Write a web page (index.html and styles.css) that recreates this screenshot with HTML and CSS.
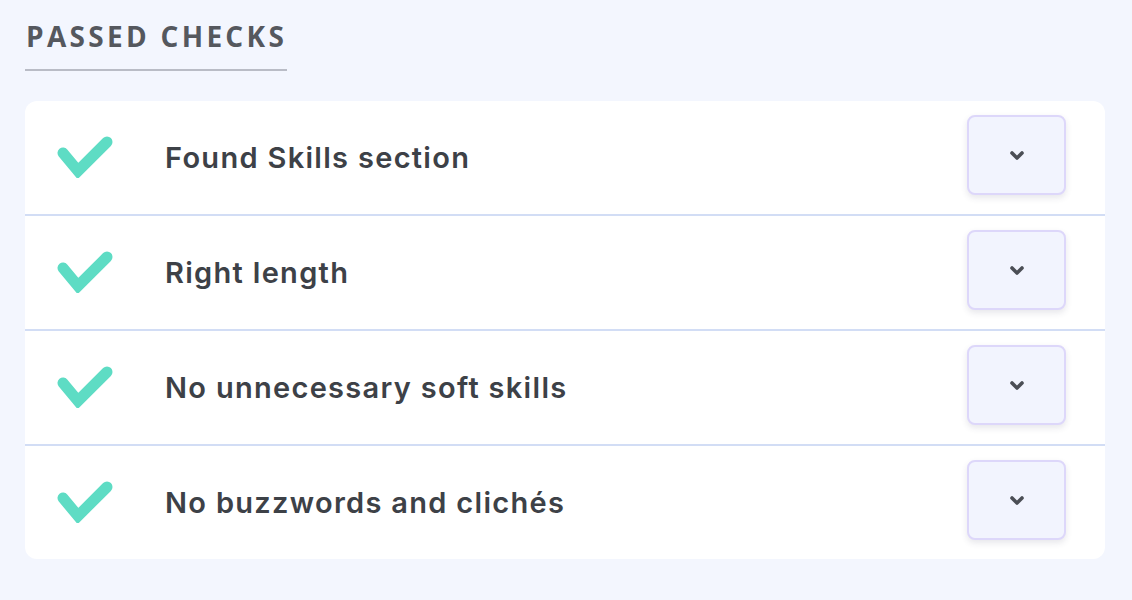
FILE: index.html
```html
<!DOCTYPE html>
<html>
<head>
<meta charset="utf-8">
<link rel="stylesheet" href="styles.css">
</head>
<body>
<div class="page">
  <h2 class="title">PASSED CHECKS</h2>
  <div class="card">
    <div class="row">
      <svg class="check" viewBox="0 0 56 42"><path d="M6 17 L21 35 L50 6" /></svg>
      <div class="label">Found Skills section</div>
      <button class="toggle"><svg viewBox="0 0 16 11"><path d="M3 3 L8 8 L13 3"/></svg></button>
    </div>
    <div class="row">
      <svg class="check" viewBox="0 0 56 42"><path d="M6 17 L21 35 L50 6" /></svg>
      <div class="label">Right length</div>
      <button class="toggle"><svg viewBox="0 0 16 11"><path d="M3 3 L8 8 L13 3"/></svg></button>
    </div>
    <div class="row">
      <svg class="check" viewBox="0 0 56 42"><path d="M6 17 L21 35 L50 6" /></svg>
      <div class="label">No unnecessary soft skills</div>
      <button class="toggle"><svg viewBox="0 0 16 11"><path d="M3 3 L8 8 L13 3"/></svg></button>
    </div>
    <div class="row">
      <svg class="check" viewBox="0 0 56 42"><path d="M6 17 L21 35 L50 6" /></svg>
      <div class="label">No buzzwords and clichés</div>
      <button class="toggle"><svg viewBox="0 0 16 11"><path d="M3 3 L8 8 L13 3"/></svg></button>
    </div>
  </div>
</div>
</body>
</html>
```
FILE: styles.css
```css
html, body { margin: 0; padding: 0; }
body { background: #f3f6fe; width: 1132px; height: 600px; overflow: hidden; }
.page { padding: 20px 27px 0 25px; }
.title {
  margin: 0;
  display: inline-block;
  font-family: "Open Sans", sans-serif;
  font-weight: 700;
  font-size: 28px;
  letter-spacing: 3.3px;
  color: #55585e;
  line-height: 32px;
  padding: 0 0 17px 1px;
  border-bottom: 2px solid #b9bcc6;
}
.card {
  margin-top: 30px;
  background: #fff;
  border-radius: 12px;
}
.row {
  display: flex;
  align-items: center;
  height: 113px;
  padding: 0 39px 0 32px;
  border-bottom: 2px solid #d2ddf5;
}
.row:last-child { border-bottom: none; }
.check { width: 56px; height: 42px; flex: none; margin-top: -2px; }
.check path { fill: none; stroke: #5edcc4; stroke-width: 11; stroke-linecap: round; stroke-linejoin: miter; }
.label {
  flex: 1;
  margin-left: 52px;
  font-family: "Inter", sans-serif;
  font-weight: 600;
  font-size: 29px;
  letter-spacing: 1.3px;
  color: #3d4147;
}
.toggle {
  flex: none;
  width: 99px;
  height: 80px;
  margin-bottom: 5px;
  border: 2px solid #ddd7fa;
  border-radius: 8px;
  background: #f2f4fe;
  box-shadow: 0 3px 6px rgba(60, 60, 90, 0.12);
  display: flex;
  align-items: center;
  justify-content: center;
  padding: 0;
}
.toggle svg { width: 16px; height: 11px; }
.toggle path { fill: none; stroke: #4b4e55; stroke-width: 3.6; stroke-linecap: round; stroke-linejoin: round; }
```
